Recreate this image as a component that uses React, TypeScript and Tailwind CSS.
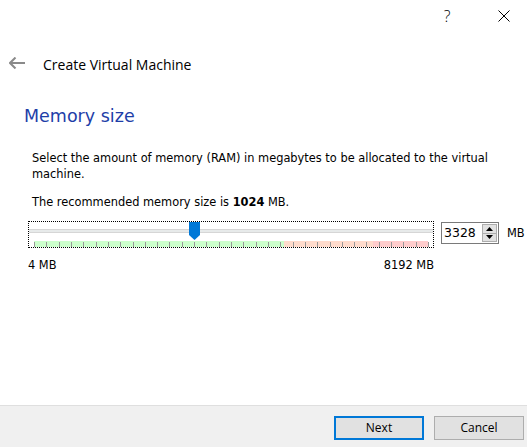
const MIN = 4
const MAX = 8192
const VALUE = 3328

const ticks = Array.from({ length: 33 }, (_, i) => i)

function MemorySlider() {
  const pct = ((VALUE - MIN) / (MAX - MIN)) * 100
  return (
    <div className="relative w-[406px] h-[27px] border border-dotted border-black">
      {/* track */}
      <div className="absolute left-0 right-0 top-[7px] h-[4px] bg-[#e7eaea] border-y border-[#d6d6d6]" />
      {/* colour bands */}
      <div className="absolute left-[5px] w-[394px] top-[19px] h-[6px] flex">
        <div className="w-[250px] bg-[#ccffcc]" />
        <div className="w-[89px] bg-[#ffdbcc]" />
        <div className="w-[55px] bg-[#ffcccc]" />
      </div>
      {/* ticks */}
      <div className="absolute left-[5px] w-[394px] top-[19px] h-[6px]">
        {ticks.map((i) => (
          <div
            key={i}
            className="absolute top-[1px] w-px h-[5px] bg-[#9a9a9a]"
            style={{ left: `${(i / 32) * 100}%` }}
          />
        ))}
      </div>
      {/* thumb */}
      <div
        className="absolute top-0 w-[11px] -ml-[5px]"
        style={{ left: `calc(5px + ${(pct / 100) * 394}px)` }}
      >
        <svg width="11" height="18" viewBox="0 0 11 18">
          <path d="M0 0 H11 V13 L5.5 18 L0 13 Z" fill="#0078d7" />
        </svg>
      </div>
    </div>
  )
}

function SpinBox() {
  return (
    <div className="flex items-center w-[58px] h-[22px] border border-[#7a7a7a] bg-white">
      <span className="flex-1 pl-[2px] text-[12.5px] text-black">3328</span>
      <div className="flex flex-col w-[15px] h-[18px] mr-[1px] border border-[#adadad] bg-[#e1e1e1]">
        <div className="flex-1 flex items-center justify-center border-b border-[#adadad]">
          <svg width="7" height="4" viewBox="0 0 7 4">
            <path d="M3.5 0 L7 4 H0 Z" fill="#000" />
          </svg>
        </div>
        <div className="flex-1 flex items-center justify-center">
          <svg width="7" height="4" viewBox="0 0 7 4">
            <path d="M0 0 H7 L3.5 4 Z" fill="#000" />
          </svg>
        </div>
      </div>
    </div>
  )
}

export default function App() {
  return (
    <div
      className="w-[527px] h-[447px] bg-white flex flex-col overflow-hidden"
      style={{ fontFamily: '"DejaVu Sans", Tahoma, sans-serif' }}
    >
      {/* title bar */}
      <div className="h-[32px] flex justify-end items-center text-black">
        <span className="w-[46px] mr-[11px] text-center text-[16px] font-['Open_Sans',sans-serif] font-light">?</span>
        <span className="w-[46px] h-[32px] flex items-center justify-center">
          <svg width="12" height="12" viewBox="0 0 12 12">
            <path d="M0.5 0.5 L11.5 11.5 M11.5 0.5 L0.5 11.5" stroke="#000" strokeWidth="1" />
          </svg>
        </span>
      </div>

      {/* header */}
      <div className="h-[64px] flex items-center pl-[9px]">
        <svg width="16" height="12" viewBox="0 0 16 12" className="mt-[-3px]">
          <path d="M1 6 H16 M6.5 0.5 L1 6 L6.5 11.5" stroke="#8a8a8a" strokeWidth="2" fill="none" />
        </svg>
        <span className="ml-[18px] text-[14px] text-black font-['Open_Sans',sans-serif]">
          Create Virtual Machine
        </span>
      </div>

      <div className="flex-1 pl-[24px] pr-[20px]">
        <h1 className="text-[17.5px] text-[#1e3ea8] leading-[24px] mt-[8px]">Memory size</h1>

        <div className="pl-[8px] pt-[22px] text-[11.4px] leading-[16px] text-black">
          <p>Select the amount of memory (RAM) in megabytes to be allocated to the virtual machine.</p>
          <p className="mt-[12px]">
            The recommended memory size is <b>1024</b> MB.
          </p>
        </div>

        <div className="mt-[11px] pl-[4px] flex items-start">
          <div className="flex flex-col">
            <MemorySlider />
            <div className="flex justify-between text-[11.4px] text-black mt-[9px]">
              <span>4 MB</span>
              <span>8192 MB</span>
            </div>
          </div>
          <div className="ml-[7px] mt-[1px]">
            <SpinBox />
          </div>
          <span className="ml-[8px] mt-[4px] text-[11.4px] text-black">MB</span>
        </div>
      </div>

      {/* footer */}
      <div className="h-[42px] bg-[#f0f0f0] border-t border-[#dfdfdf] flex justify-end items-start pt-[10px] pr-[3px] gap-[10px] font-['Open_Sans',sans-serif]">
        <button className="w-[90px] h-[24px] bg-[#e1e1e1] border-2 border-[#0078d7] text-[12px] text-black">
          Next
        </button>
        <button className="w-[90px] h-[24px] bg-[#e1e1e1] border border-[#adadad] text-[12px] text-black">
          Cancel
        </button>
      </div>
    </div>
  )
}
